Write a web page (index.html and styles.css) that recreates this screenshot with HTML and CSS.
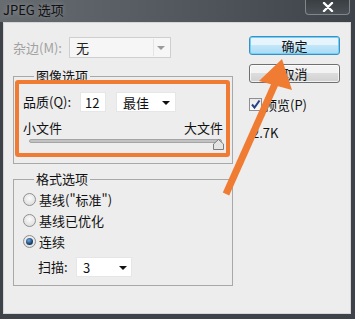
FILE: index.html
```html
<!DOCTYPE html>
<html lang="zh">
<head>
    <meta charset="UTF-8">
    <title>JPEG 选项</title>
    <link rel="stylesheet" href="styles.css">
</head>
<body>
<div class="window">
    <div class="titlebar">
        <span class="title">JPEG 选项</span>
        <span class="close">
            <svg width="12" height="10" viewBox="0 0 12 10"><path d="M2 1 L10 9 M10 1 L2 9" stroke="#fff" stroke-width="2.4" stroke-linecap="round"/></svg>
        </span>
    </div>

    <div class="client">
        <div class="left">
            <div class="matte-row">
                <span class="lbl disabled">杂边(M):</span>
                <div class="select select-off">无<span class="drop"><i class="tri tri-off"></i></span></div>
            </div>

            <div class="group group-image">
                <div class="legend">图像选项</div>
                <div class="quality-row">
                    <span class="lbl q-lbl">品质(Q):</span>
                    <div class="field q-num">12</div>
                    <div class="select q-sel">最佳<i class="tri"></i></div>
                </div>
                <div class="size-labels">
                    <span>小文件</span>
                    <span>大文件</span>
                </div>
                <div class="slider">
                    <div class="track"></div>
                    <div class="thumb">
                        <svg width="11" height="11" viewBox="0 0 11 11"><path d="M0.5 10.5 L0.5 5 L5.5 0.5 L10.5 5 L10.5 10.5 Z" fill="#e4e4e4" stroke="#7c7c7c"/></svg>
                    </div>
                </div>
            </div>

            <div class="group group-format">
                <div class="legend">格式选项</div>
                <div class="radio-row"><span class="radio"></span>基线("标准")</div>
                <div class="radio-row"><span class="radio"></span>基线已优化</div>
                <div class="radio-row"><span class="radio on"></span>连续</div>
                <div class="scan-row">
                    <span class="lbl scan-lbl">扫描:</span>
                    <div class="select scan-sel">3<i class="tri"></i></div>
                </div>
            </div>
        </div>

        <div class="right">
            <div class="btn btn-default">确定</div>
            <div class="btn">取消</div>
            <div class="check-row">
                <span class="box">
                    <svg width="11" height="11" viewBox="0 0 11 11"><path d="M2 5.5 L4.5 8.5 L9.5 1.5" fill="none" stroke="#2b3f86" stroke-width="2"/></svg>
                </span>
                预览(P)
            </div>
            <div class="size">2.7K</div>
        </div>
    </div>

    <!-- 标注：橙色框和箭头 -->
    <svg class="marks" width="355" height="319" viewBox="0 0 355 319">
        <rect x="17" y="82" width="211" height="73" rx="1" fill="none" stroke="#f07c34" stroke-width="4"/>
        <line x1="275" y1="84" x2="226" y2="194" stroke="#f07c34" stroke-width="7"/>
        <polygon points="282,59 259,81 292,90" fill="#f07c34"/>
    </svg>
</div>
</body>
</html>
```

FILE: styles.css
```css
*{
    margin: 0;
    padding: 0;
    box-sizing: border-box;
}

body{
    font-family: "Noto Sans CJK SC", "Noto Sans", sans-serif;
    font-size: 13px;
    color: #111;
}

.window{
    width: 355px;
    height: 319px;
    background: #3d4349;
    position: relative;
    display: flex;
    flex-direction: column;
}

.titlebar{
    height: 22px;
    display: flex;
    align-items: flex-start;
    background: linear-gradient(to right, #676c71, #50565c 55%, #3d4349);
}
.title{
    padding-left: 3px;
    line-height: 20px;
    color: #101010;
    text-shadow: 0 0 5px rgba(255,255,255,.35);
}
.close{
    margin-left: auto;
    margin-right: 5px;
    width: 45px;
    height: 15px;
    border: 1px solid #80868c;
    border-top: none;
    border-radius: 0 0 4px 4px;
    background: linear-gradient(#3a3f44, #4a5055);
    display: flex;
    align-items: center;
    justify-content: center;
}

.client{
    flex: 1;
    margin: 0 4px 5px 3px;
    background: #ededed;
    border: 1px solid #d6d6d6;
    display: flex;
}

/* 左边一栏 */
.left{
    width: 220px;
    margin-left: 9px;
}
.lbl{
    display: inline-block;
    line-height: 20px;
}
.disabled{
    color: #a2a2a2;
}

.matte-row{
    margin-top: 14px;
    display: flex;
    align-items: center;
}
.matte-row .lbl{
    width: 56px;
}

.select{
    position: relative;
    height: 20px;
    line-height: 20px;
    background: #fff;
    border: 1px solid #e6e6e6;
    padding-left: 6px;
}
.tri{
    position: absolute;
    top: 8px;
    right: 5px;
    width: 0;
    height: 0;
    border-left: 4px solid transparent;
    border-right: 4px solid transparent;
    border-top: 4px solid #111;
}
.select-off{
    width: 102px;
    height: 21px;
    border-color: #cfcfcf;
    background: #f6f6f6;
    color: #222;
}
.select-off .drop{
    position: absolute;
    top: 1px;
    right: 1px;
    width: 16px;
    height: 17px;
    border-left: 1px solid #e4e4e4;
}
.tri-off{
    top: 7px;
    right: 4px;
    border-top-color: #9a9a9a;
}

.group{
    border: 1px solid #a8a8a8;
    padding: 0 9px;
}
.legend{
    width: max-content;
    height: 16px;
    line-height: 16px;
    margin: -9px 0 0 11px;
    padding: 0 2px;
    background: #ededed;
}

.group-image{
    margin-top: 18px;
    padding-bottom: 12px;
}
.quality-row{
    margin-top: 8px;
    display: flex;
    align-items: center;
    height: 20px;
}
.q-lbl{
    width: 57px;
}
.field{
    width: 26px;
    height: 20px;
    line-height: 20px;
    background: #fff;
    border: 1px solid #e6e6e6;
    padding-left: 4px;
}
.q-sel{
    width: 60px;
    margin-left: 10px;
}
.size-labels{
    margin-top: 8px;
    line-height: 15px;
    display: flex;
    justify-content: space-between;
}
.slider{
    position: relative;
    height: 12px;
}
.track{
    margin: 4px 0 0 6px;
    height: 4px;
    width: 193px;
    background: #c2c2c2;
    border: 1px solid #a5a5a5;
    border-radius: 2px;
}
.thumb{
    position: absolute;
    top: 0;
    right: -1px;
    width: 11px;
    height: 11px;
}
.thumb svg{
    display: block;
}

.group-format{
    margin-top: 15px;
    padding-bottom: 8px;
}
.radio-row{
    height: 21px;
    display: flex;
    align-items: center;
}
.group-format .legend + .radio-row{
    margin-top: 2px;
}
.radio{
    width: 13px;
    height: 13px;
    margin-right: 3px;
    border: 1px solid #8e9090;
    border-radius: 50%;
    background: radial-gradient(circle at 50% 40%, #fbfbfb, #d6d6d6);
    display: flex;
    align-items: center;
    justify-content: center;
}
.radio.on::after{
    content: "";
    width: 7px;
    height: 7px;
    border-radius: 50%;
    background: radial-gradient(circle at 40% 35%, #6fa8dc, #17406e 60%, #0c2340);
}
.scan-row{
    margin-top: 5px;
    display: flex;
    align-items: center;
    padding-left: 15px;
}
.scan-lbl{
    width: 38px;
}
.scan-sel{
    width: 56px;
}
.scan-sel .tri{
    right: 4px;
}

/* 右边一栏 */
.right{
    width: 91px;
    margin-left: 16px;
    margin-top: 13px;
}
.btn{
    height: 19px;
    line-height: 17px;
    text-align: center;
    border: 1px solid #707070;
    border-radius: 3px;
    background: linear-gradient(#f3f3f3 45%, #dddddd 50%, #d0d0d0);
    box-shadow: inset 0 0 0 1px rgba(255,255,255,.7);
}
.btn-default{
    border-color: #3c8fc6;
    background: linear-gradient(#e6f5fd 45%, #c3e6f8 50%, #a9dbf6);
    box-shadow: inset 0 0 0 1px #71d2f5;
}
.btn + .btn{
    margin-top: 9px;
}
.check-row{
    margin-top: 15px;
    height: 13px;
    line-height: 13px;
    display: flex;
    align-items: center;
}
.box{
    width: 13px;
    height: 13px;
    margin-right: 2px;
    border: 1px solid #8f8f8f;
    background: linear-gradient(#e9e9e9, #fafafa);
    display: flex;
    align-items: center;
    justify-content: center;
}
.box svg{
    display: block;
}
.size{
    margin-top: 14px;
    padding-left: 3px;
    line-height: 16px;
}

.marks{
    position: absolute;
    left: 0;
    top: 0;
}
```
